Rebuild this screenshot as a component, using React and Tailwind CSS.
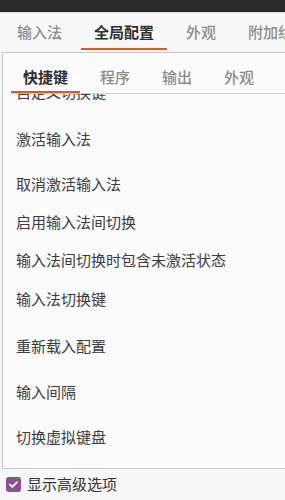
const topTabs = [
  { label: "输入法", active: false },
  { label: "全局配置", active: true },
  { label: "外观", active: false },
  { label: "附加组件", active: false },
];

const innerTabs = [
  { label: "快捷键", active: true },
  { label: "程序", active: false },
  { label: "输出", active: false },
  { label: "外观", active: false },
];

const rows = [
  { label: "自定义切换键", h: "h-[46px]" },
  { label: "激活输入法", h: "h-[48px]" },
  { label: "取消激活输入法", h: "h-[42px]" },
  { label: "启用输入法间切换", h: "h-[34px]" },
  { label: "输入法间切换时包含未激活状态", h: "h-[42px]" },
  { label: "输入法切换键", h: "h-[36px]" },
  { label: "重新载入配置", h: "h-[58px]" },
  { label: "输入间隔", h: "h-[34px]" },
  { label: "切换虚拟键盘", h: "h-[56px]" },
];

export default function App() {
  return (
    <div className="w-[285px] h-[500px] overflow-hidden bg-[#f7f7f7] flex flex-col font-['Noto_Sans_CJK_SC','Noto_Sans',sans-serif]">
      <div className="h-[13px] shrink-0 bg-[#2c2c2c] border-b border-[#d4d4d4]" />

      {/* top tabs */}
      <div className="h-[39px] shrink-0 flex ml-[4px] gap-[6px] whitespace-nowrap">
        {topTabs.map((t) => (
          <div
            key={t.label}
            className={
              "h-[37px] px-[13px] pt-[3px] flex items-center text-[15px] border-b-2 " +
              (t.active
                ? "border-[#e95420] text-[#2f2f2f] font-bold"
                : "border-transparent text-[#8c8c8c] font-medium")
            }
          >
            {t.label}
          </div>
        ))}
      </div>

      {/* panel */}
      <div className="ml-[2px] h-[417px] shrink-0 border-l border-t border-b border-[#c6c6c6] bg-[#fbfbfb] flex flex-col">
        <div className="h-[41px] shrink-0 flex ml-[8px] gap-[8px] border-b border-[#cfcfcf] whitespace-nowrap">
          {innerTabs.map((t) => (
            <div
              key={t.label}
              className={
                "h-[40px] px-[12px] pt-[10px] flex items-center text-[15px] border-b-2 " +
                (t.active
                  ? "border-[#e95420] text-[#2f2f2f] font-bold"
                  : "border-transparent text-[#8c8c8c] font-medium")
              }
            >
              {t.label}
            </div>
          ))}
        </div>
        <div className="flex-1 overflow-hidden">
          <div className="-mt-[25px] flex flex-col">
            {rows.map((r) => (
              <div
                key={r.label}
                className={r.h + " shrink-0 flex items-center pl-[13px] text-[15px] text-[#3c3c3c] whitespace-nowrap"}
              >
                {r.label}
              </div>
            ))}
          </div>
        </div>
      </div>

      {/* advanced toggle */}
      <div className="flex items-center gap-[6px] pl-[6px] pt-[6px]">
        <div className="w-[15px] h-[15px] rounded-[3px] bg-[#8b5094] flex items-center justify-center">
          <svg width="11" height="11" viewBox="0 0 12 12" fill="none">
            <path d="M2.2 6.2 L4.8 8.7 L9.8 3.4" stroke="white" strokeWidth="2" strokeLinecap="round" strokeLinejoin="round" />
          </svg>
        </div>
        <span className="text-[15px] text-[#333333] leading-[18px]">显示高级选项</span>
      </div>
    </div>
  );
}
